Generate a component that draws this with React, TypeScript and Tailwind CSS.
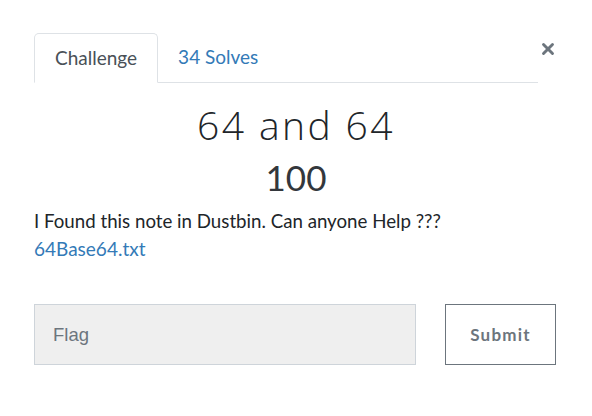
import { X } from 'lucide-react';

export default function App() {
  return (
    <div className="w-[592px] h-[416px] bg-white font-['Lato',sans-serif] text-[#212529]">
      <div className="pt-[33px] px-[34px]">
        {/* Tabs header */}
        <div className="flex items-start">
          <div className="flex w-[504px] border-b border-[#dee2e6]">
            <div className="h-[50px] -mb-px px-[20px] flex items-center border border-[#dee2e6] border-b-white rounded-t-[5px] bg-white text-[19px] text-[#495057]">
              Challenge
            </div>
            <div className="h-[49px] px-[20px] flex items-center text-[19px] text-[#337ab7]">
              34 Solves
            </div>
          </div>
          <X className="ml-[1px] mt-[7px] w-[18px] h-[18px] text-[#6c757d]" strokeWidth={3.8} />
        </div>

        {/* Challenge info */}
        <h2 className="mt-[19px] text-center text-[39px] leading-[46px] font-light tracking-[2.4px] text-[#212529] font-['Open_Sans',sans-serif]">
          64 and 64
        </h2>
        <h3 className="mt-[8px] text-center text-[35px] leading-[42px] text-[#33373c]">100</h3>

        <p className="mt-[9px] text-[18.7px] leading-[28px]">I Found this note in Dustbin. Can anyone Help ???</p>
        <a className="block text-[19px] leading-[28px] text-[#337ab7]">64Base64.txt</a>

        {/* Flag form */}
        <div className="mt-[41px] flex gap-[29px]">
          <div className="w-[382px] h-[61px] bg-[#efefef] border border-[#ced4da] flex items-center px-[18px] text-[18.5px] text-[#6c757d] font-['Liberation_Sans',sans-serif]">
            Flag
          </div>
          <button className="w-[111px] h-[61px] border border-[#6c757d] bg-white text-[#6c757d] text-[17px] font-bold tracking-[1.2px]">
            Submit
          </button>
        </div>
      </div>
    </div>
  );
}
